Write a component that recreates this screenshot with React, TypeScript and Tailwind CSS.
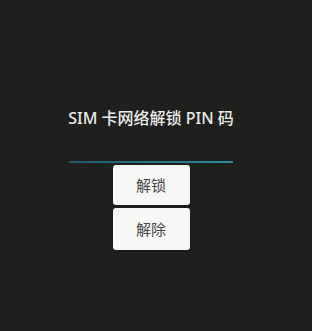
export default function App() {
  return (
    <div
      className="h-[331px] w-[312px] overflow-hidden bg-[#1f201e]"
      style={{ fontFamily: '"Noto Sans", "Noto Sans CJK SC", sans-serif' }}
    >
      <div className="ml-[69px] flex w-[164px] flex-col items-center pt-[107px]">
        <h1 className="text-[16px] leading-[22px] font-medium whitespace-nowrap text-[#ececea]">
          SIM 卡网络解锁 PIN 码
        </h1>
        <div className="mt-[32px] h-[2px] w-full bg-gradient-to-r from-[#1d5a6c] to-[#2d8aa4]" />
        <div className="mt-[2px] flex flex-col gap-[3px]">
          <button className="h-[40px] w-[77px] rounded-[3px] bg-[#f7f7f5] text-[15px] text-[#454545] shadow-sm">
            解锁
          </button>
          <button className="h-[42px] w-[77px] rounded-[3px] bg-[#f7f7f5] text-[15px] text-[#454545] shadow-sm">
            解除
          </button>
        </div>
      </div>
    </div>
  );
}
